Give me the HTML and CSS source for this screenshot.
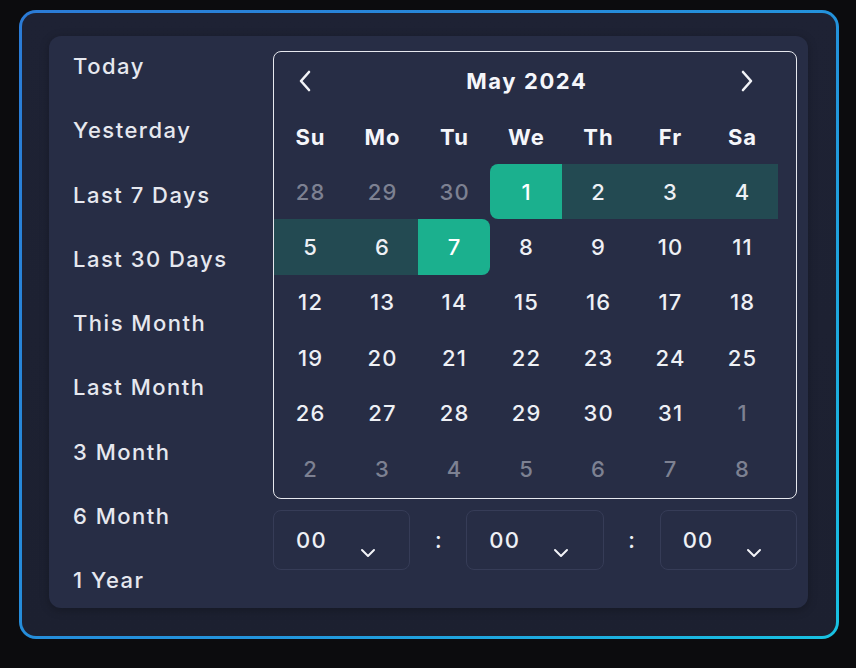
FILE: index.html
```html
<!DOCTYPE html>
<html>
<head>
<meta charset="utf-8">
<link rel="stylesheet" href="styles.css">
</head>
<body>
<div class="frame">
  <div class="panel">
    <ul class="presets">
      <li>Today</li>
      <li>Yesterday</li>
      <li>Last 7 Days</li>
      <li>Last 30 Days</li>
      <li>This Month</li>
      <li>Last Month</li>
      <li>3 Month</li>
      <li>6 Month</li>
      <li>1 Year</li>
    </ul>
    <div class="main">
      <div class="calendar">
        <div class="cal-head">
          <svg class="arrow" width="16" height="24" viewBox="0 0 16 24"><path d="M12 3 L4 12 L12 21" fill="none" stroke="#f2f3f7" stroke-width="2.6" stroke-linecap="round" stroke-linejoin="round"/></svg>
          <div class="month">May 2024</div>
          <svg class="arrow" width="16" height="24" viewBox="0 0 16 24"><path d="M4 3 L12 12 L4 21" fill="none" stroke="#f2f3f7" stroke-width="2.6" stroke-linecap="round" stroke-linejoin="round"/></svg>
        </div>
        <div class="grid">
          <div class="wd">Su</div><div class="wd">Mo</div><div class="wd">Tu</div><div class="wd">We</div><div class="wd">Th</div><div class="wd">Fr</div><div class="wd">Sa</div>
          <div class="d dim">28</div><div class="d dim">29</div><div class="d dim">30</div><div class="d sel start">1</div><div class="d range">2</div><div class="d range">3</div><div class="d range">4</div>
          <div class="d range">5</div><div class="d range">6</div><div class="d sel end">7</div><div class="d">8</div><div class="d">9</div><div class="d">10</div><div class="d">11</div>
          <div class="d">12</div><div class="d">13</div><div class="d">14</div><div class="d">15</div><div class="d">16</div><div class="d">17</div><div class="d">18</div>
          <div class="d">19</div><div class="d">20</div><div class="d">21</div><div class="d">22</div><div class="d">23</div><div class="d">24</div><div class="d">25</div>
          <div class="d">26</div><div class="d">27</div><div class="d">28</div><div class="d">29</div><div class="d">30</div><div class="d">31</div><div class="d dim">1</div>
          <div class="d dim">2</div><div class="d dim">3</div><div class="d dim">4</div><div class="d dim">5</div><div class="d dim">6</div><div class="d dim">7</div><div class="d dim">8</div>
        </div>
      </div>
      <div class="time">
        <div class="sel-box"><span>00</span><svg width="16" height="10" viewBox="0 0 16 10"><path d="M2 2 L8 8 L14 2" fill="none" stroke="#f2f3f7" stroke-width="2" stroke-linecap="round" stroke-linejoin="round"/></svg></div>
        <div class="colon">:</div>
        <div class="sel-box"><span>00</span><svg width="16" height="10" viewBox="0 0 16 10"><path d="M2 2 L8 8 L14 2" fill="none" stroke="#f2f3f7" stroke-width="2" stroke-linecap="round" stroke-linejoin="round"/></svg></div>
        <div class="colon">:</div>
        <div class="sel-box"><span>00</span><svg width="16" height="10" viewBox="0 0 16 10"><path d="M2 2 L8 8 L14 2" fill="none" stroke="#f2f3f7" stroke-width="2" stroke-linecap="round" stroke-linejoin="round"/></svg></div>
      </div>
    </div>
  </div>
</div>
</body>
</html>
```

FILE: styles.css
```css
* { box-sizing: border-box; }
html, body {
  margin: 0;
  padding: 0;
  background: #0c0c0e;
  width: 856px;
  height: 668px;
  overflow: hidden;
  font-family: "Inter", "DejaVu Sans", sans-serif;
  color: #eef0f5;
}
.frame {
  margin: 10px 0 0 19px;
  width: 820px;
  height: 629px;
  border: 3px solid transparent;
  border-radius: 17px;
  background:
    linear-gradient(#1e2234, #1c2030) padding-box,
    linear-gradient(135deg, #2b7bd6 0%, #2394dc 60%, #18c2e2 100%) border-box;
  padding: 23px 27px 27px 27px;
}
.panel {
  width: 759px;
  height: 572px;
  background: #272d45;
  border-radius: 12px;
  display: flex;
  box-shadow: 0 2px 10px rgba(0,0,0,0.25);
}
.presets {
  list-style: none;
  margin: -2px 0 0 0;
  padding: 0 0 0 24px;
  width: 224px;
  flex: none;
}
.presets li {
  height: 64.3px;
  line-height: 64.3px;
  font-size: 22px;
  letter-spacing: 1.5px;
  font-weight: 500;
  color: #e6e8ef;
  white-space: nowrap;
}
.main {
  flex: 1;
  padding: 15px 11px 0 0;
  display: flex;
  flex-direction: column;
}
.calendar {
  height: 448px;
  border: 1.6px solid #e6e8ee;
  border-radius: 8px;
}
.cal-head {
  height: 58px;
  display: flex;
  align-items: center;
  justify-content: space-between;
  padding: 0 41px 0 23px;
}
.month {
  font-size: 22px;
  letter-spacing: 1.6px;
  padding-left: 1.6px;
  font-weight: 700;
  color: #f5f6fa;
}
.grid {
  width: 504px;
  display: grid;
  grid-template-columns: repeat(7, 72px);
  grid-template-rows: 54px repeat(6, 55.4px);
}
.wd {
  display: flex;
  align-items: center;
  justify-content: center;
  font-size: 22px;
  letter-spacing: 1px;
  padding-left: 1px;
  font-weight: 700;
  color: #f5f6fa;
}
.d {
  display: flex;
  align-items: center;
  justify-content: center;
  font-size: 22px;
  letter-spacing: 1.2px;
  padding-left: 1.2px;
  font-weight: 500;
  color: #eef0f5;
}
.d.dim { color: #7d8192; }
.d.range { background: #234a52; }
.d.sel { background: #1bb08e; color: #ffffff; }
.d.start { border-radius: 8px 0 0 8px; }
.d.end { border-radius: 0 8px 8px 0; }
.time {
  margin-top: 11px;
  display: flex;
  height: 60px;
}
.sel-box {
  flex: 1;
  border: 1px solid #363c57;
  border-radius: 8px;
  display: flex;
  align-items: center;
  padding-left: 22px;
  font-size: 22px;
  letter-spacing: 1.2px;
  font-weight: 500;
}
.sel-box svg {
  margin-left: 33px;
  margin-top: 26px;
}
.colon {
  width: 56px;
  display: flex;
  align-items: center;
  justify-content: center;
  font-size: 22px;
  font-weight: 500;
}
```
